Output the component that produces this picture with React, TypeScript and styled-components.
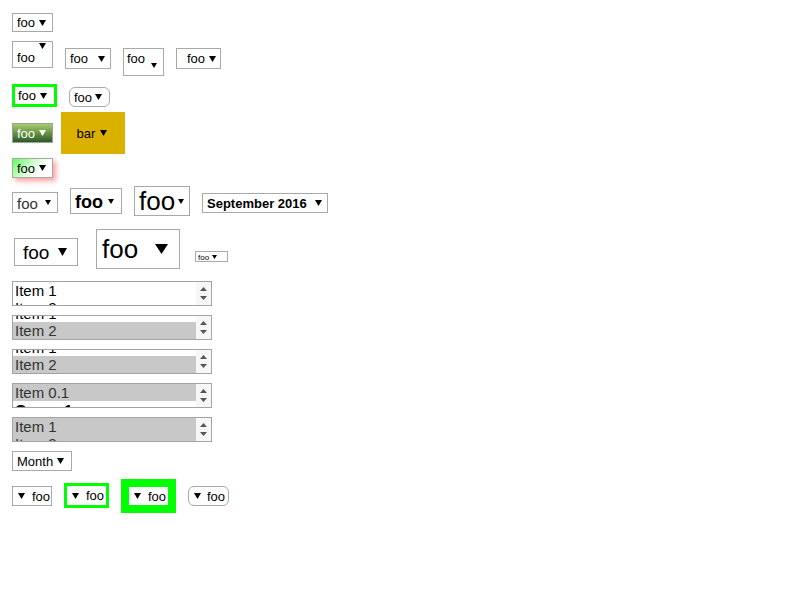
import React from 'react';
import styled, { createGlobalStyle, css } from 'styled-components';

const GlobalStyle = createGlobalStyle`
    html, body {
        margin: 0;
        padding: 0;
        background: #ffffff;
    }
    body {
        font-family: 'Liberation Sans', Arial, sans-serif;
    }
`;

const LIME = '#00ff00';
const BORDER = '#a9a9a9';

interface ArrowProps {
    w?: number;
    h?: number;
    color?: string;
}

const ArrowSvg = styled.svg`
    flex-shrink: 0;
    display: block;
`;

const Arrow = ({ w = 7, h = 6, color = '#000' }: ArrowProps): JSX.Element => (
    <ArrowSvg width={w} height={h} viewBox="0 0 10 10" preserveAspectRatio="none">
        <polygon points="0,0 10,0 5,10" fill={color} />
    </ArrowSvg>
);

const Page = styled.div`
    display: flex;
    flex-direction: column;
    align-items: flex-start;
    padding-left: 12px;
`;

const Row = styled.div<{ $top: number; $gap?: number }>`
    display: flex;
    align-items: flex-start;
    margin-top: ${(p) => p.$top}px;
    gap: ${(p) => p.$gap ?? 12}px;
`;

interface BoxProps {
    $w: number;
    $h: number;
    $pl?: number;
    $pr?: number;
    $mt?: number;
    $ml?: number;
    $size?: number;
}

const Select = styled.div<BoxProps>`
    box-sizing: border-box;
    flex-shrink: 0;
    display: flex;
    align-items: center;
    justify-content: space-between;
    width: ${(p) => p.$w}px;
    height: ${(p) => p.$h}px;
    margin-top: ${(p) => p.$mt ?? 0}px;
    margin-left: ${(p) => p.$ml ?? 0}px;
    padding: 0 ${(p) => p.$pr ?? 6}px 0 ${(p) => p.$pl ?? 4}px;
    border: 1px solid ${BORDER};
    background: #ffffff;
    color: #000000;
    font-family: 'Liberation Sans', Arial, sans-serif;
    font-size: ${(p) => p.$size ?? 13}px;
    white-space: nowrap;
`;

const Label = styled.span<{ $weight?: number; $color?: string }>`
    display: block;
    line-height: 1.15;
    padding-top: 2px;
    font-weight: ${(p) => p.$weight ?? 400};
    color: ${(p) => p.$color ?? 'inherit'};
`;

/* text at the bottom, arrow at the top */
const TallSelect = styled(Select)`
    align-items: stretch;
    ${Label} {
        align-self: flex-end;
        padding-bottom: 1px;
    }
    ${ArrowSvg} {
        align-self: flex-start;
        margin-top: 1px;
    }
`;

/* text at the top, small arrow lower down */
const TopSelect = styled(Select)`
    align-items: flex-start;
    padding-top: 1px;
    ${ArrowSvg} {
        margin-top: 13px;
    }
`;

const LimeSelect = styled(Select)<{ $bw: number }>`
    border: ${(p) => p.$bw}px solid ${LIME};
`;

const RoundSelect = styled(Select)`
    border-radius: 6px;
`;

const GreenGradientSelect = styled(Select)`
    border-color: #a0a0a0;
    background: linear-gradient(#a6cb6c, #2b5b26);
    color: #ffffff;
`;

const GoldSelect = styled(Select)`
    border: none;
    background: #dbb100;
    justify-content: center;
    gap: 5px;
`;

const GlowSelect = styled(Select)`
    background: linear-gradient(135deg, #5cff5c 0%, #d8ffd8 45%, #ffffff 70%);
    box-shadow: 3px 3px 5px rgba(255, 80, 80, 0.55);
`;

const RtlSelect = styled(Select)<{ $gap: number }>`
    justify-content: flex-start;
    gap: ${(p) => p.$gap}px;
`;

const RtlLime = styled(RtlSelect)<{ $bw: number }>`
    border: ${(p) => p.$bw}px solid ${LIME};
`;

const RtlRound = styled(RtlSelect)`
    border-radius: 6px;
`;

/* list boxes */
const ListRow = styled.div<{ $top?: number }>`
    margin-top: ${(p) => p.$top ?? 9}px;
`;

const ListBox = styled.div<{ $fill?: boolean }>`
    box-sizing: border-box;
    width: 200px;
    height: 25px;
    border: 1px solid #a4a4a4;
    display: flex;
    overflow: hidden;
    background: ${(p) => (p.$fill ? '#c8c8c8' : '#ffffff')};
    font-family: 'Liberation Sans', Arial, sans-serif;
    font-size: 15px;
`;

const Options = styled.div<{ $scroll: number }>`
    flex: 1;
    overflow: hidden;
    > div:first-child {
        margin-top: ${(p) => -p.$scroll}px;
    }
`;

const Option = styled.div<{ $selected?: boolean; $group?: boolean }>`
    height: 17px;
    line-height: 17px;
    padding-left: 2px;
    white-space: nowrap;
    color: #000000;
    ${(p) =>
        p.$selected &&
        css`
            background: #c8c8c8;
            color: #333333;
        `}
    ${(p) =>
        p.$group &&
        css`
            font-weight: 700;
        `}
`;

const ScrollBar = styled.div`
    width: 15px;
    flex-shrink: 0;
    background: #f7f7f7;
    display: flex;
    flex-direction: column;
    align-items: center;
    justify-content: space-between;
    padding: 5px 0 5px;
    box-sizing: border-box;
`;

const ScrollArrowSvg = styled.svg`
    display: block;
`;

const ScrollArrows = (): JSX.Element => (
    <ScrollBar>
        <ScrollArrowSvg width={7} height={4} viewBox="0 0 10 10" preserveAspectRatio="none">
            <polygon points="0,10 10,10 5,0" fill="#555" />
        </ScrollArrowSvg>
        <ScrollArrowSvg width={7} height={4} viewBox="0 0 10 10" preserveAspectRatio="none">
            <polygon points="0,0 10,0 5,10" fill="#555" />
        </ScrollArrowSvg>
    </ScrollBar>
);

interface ListItem {
    text: string;
    selected?: boolean;
    group?: boolean;
}

const List = ({ items, scroll = 0, fill }: { items: ListItem[]; scroll?: number; fill?: boolean }) => (
    <ListBox $fill={fill}>
        <Options $scroll={scroll}>
            {items.map((it) => (
                <Option key={it.text} $selected={it.selected} $group={it.group}>
                    {it.text}
                </Option>
            ))}
        </Options>
        <ScrollArrows />
    </ListBox>
);

export default function App(): JSX.Element {
    return (
        <>
            <GlobalStyle />
            <Page>
                <Row $top={13}>
                    <Select $w={41} $h={19} $pr={6}>
                        <Label>foo</Label>
                        <Arrow />
                    </Select>
                </Row>

                <Row $top={9}>
                    <TallSelect $w={41} $h={27} $pr={6}>
                        <Label>foo</Label>
                        <Arrow />
                    </TallSelect>
                    <Select $w={46} $h={21} $mt={7} $pr={5}>
                        <Label>foo</Label>
                        <Arrow />
                    </Select>
                    <TopSelect $w={41} $h={28} $mt={7} $pl={3} $pr={6}>
                        <Label>foo</Label>
                        <Arrow w={6} h={5} />
                    </TopSelect>
                    <Select $w={45} $h={21} $mt={7} $pl={10} $pr={4}>
                        <Label>foo</Label>
                        <Arrow />
                    </Select>
                </Row>

                <Row $top={8}>
                    <LimeSelect $bw={3} $w={45} $h={23} $pl={3} $pr={7}>
                        <Label>foo</Label>
                        <Arrow />
                    </LimeSelect>
                    <RoundSelect $w={41} $h={20} $mt={3} $pr={7}>
                        <Label>foo</Label>
                        <Arrow />
                    </RoundSelect>
                </Row>

                <Row $top={5} $gap={8}>
                    <GreenGradientSelect $w={41} $h={20} $mt={11} $pr={6}>
                        <Label>foo</Label>
                        <Arrow color="#ffffff" />
                    </GreenGradientSelect>
                    <GoldSelect $w={64} $h={42}>
                        <Label>bar</Label>
                        <Arrow />
                    </GoldSelect>
                </Row>

                <Row $top={4}>
                    <GlowSelect $w={41} $h={20} $pr={6}>
                        <Label>foo</Label>
                        <Arrow />
                    </GlowSelect>
                </Row>

                <Row $top={8}>
                    <Select $w={46} $h={21} $mt={6} $pr={6} $size={15}>
                        <Label $color="#333">foo</Label>
                        <Arrow w={6} h={5} />
                    </Select>
                    <Select $w={52} $h={26} $mt={2} $pr={7} $size={18}>
                        <Label $weight={700}>foo</Label>
                        <Arrow w={6} h={5} />
                    </Select>
                    <Select $w={56} $h={30} $pr={5} $size={26}>
                        <Label>foo</Label>
                        <Arrow w={6} h={5} />
                    </Select>
                    <Select $w={126} $h={20} $mt={7} $pr={5}>
                        <Label $weight={700}>September 2016</Label>
                        <Arrow />
                    </Select>
                </Row>

                <Row $top={13} $gap={18}>
                    <Select $w={64} $h={28} $mt={9} $ml={2} $pl={8} $pr={10} $size={19}>
                        <Label>foo</Label>
                        <Arrow w={9} h={8} />
                    </Select>
                    <Select $w={84} $h={40} $pl={5} $pr={11} $size={26}>
                        <Label>foo</Label>
                        <Arrow w={13} h={10} />
                    </Select>
                    <Select $w={33} $h={11} $mt={22} $ml={-3} $pl={2} $pr={10} $size={8}>
                        <Label>foo</Label>
                        <Arrow w={5} h={4} />
                    </Select>
                </Row>

                <ListRow $top={12}>
                    <List items={[{ text: 'Item 1' }, { text: 'Item 2' }]} />
                </ListRow>
                <ListRow>
                    <List items={[{ text: 'Item 1' }, { text: 'Item 2', selected: true }]} scroll={11} />
                </ListRow>
                <ListRow>
                    <List items={[{ text: 'Item 1' }, { text: 'Item 2', selected: true }]} scroll={11} />
                </ListRow>
                <ListRow>
                    <List items={[{ text: 'Item 0.1', selected: true }, { text: 'Group 1', group: true }]} />
                </ListRow>
                <ListRow>
                    <List
                        fill
                        items={[
                            { text: 'Item 1', selected: true },
                            { text: 'Item 2', selected: true },
                        ]}
                    />
                </ListRow>

                <Row $top={9}>
                    <Select $w={60} $h={20} $pr={7}>
                        <Label>Month</Label>
                        <Arrow />
                    </Select>
                </Row>

                <Row $top={8}>
                    <RtlSelect $gap={7} $w={40} $h={20} $mt={7} $pl={5}>
                        <Arrow />
                        <Label>foo</Label>
                    </RtlSelect>
                    <RtlLime $bw={3} $gap={7} $w={45} $h={25} $mt={4} $pl={5}>
                        <Arrow />
                        <Label>foo</Label>
                    </RtlLime>
                    <RtlLime $bw={8} $gap={7} $w={55} $h={34} $pl={5}>
                        <Arrow />
                        <Label>foo</Label>
                    </RtlLime>
                    <RtlRound $gap={6} $w={41} $h={20} $mt={7} $pl={5}>
                        <Arrow />
                        <Label>foo</Label>
                    </RtlRound>
                </Row>
            </Page>
        </>
    );
}
